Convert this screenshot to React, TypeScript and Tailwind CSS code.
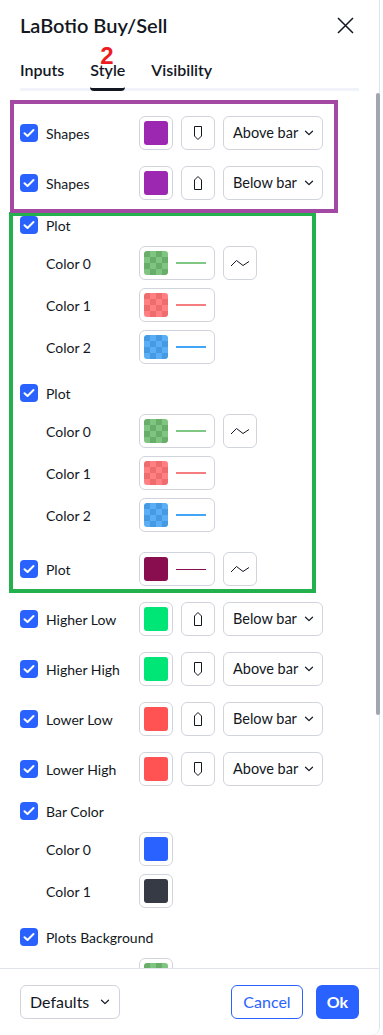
import React from 'react';

const font = "font-['Lato',sans-serif]";

type Swatch = { solid?: string; dark?: string; light?: string };

const GREEN_CHK: Swatch = { dark: '#69ad6b', light: '#7fc481' };
const RED_CHK: Swatch = { dark: '#ee6b6e', light: '#ff7f82' };
const BLUE_CHK: Swatch = { dark: '#459ae3', light: '#5aaef5' };

const Check = () => (
  <span className="flex h-[18px] w-[18px] shrink-0 items-center justify-center rounded-[4px] bg-[#2962ff]">
    <svg width="12" height="10" viewBox="0 0 12 10" fill="none">
      <path d="M1.5 5.2 L4.5 8 L10.5 2" stroke="white" strokeWidth="2" strokeLinecap="round" strokeLinejoin="round" />
    </svg>
  </span>
);

const SwatchBox = ({ s }: { s: Swatch }) => {
  if (s.solid) return <span className="block h-6 w-6 rounded-[3px]" style={{ background: s.solid }} />;
  const cells = Array.from({ length: 16 }, (_, i) => ((Math.floor(i / 4) + (i % 4)) % 2 === 0 ? s.dark : s.light));
  return (
    <span className="grid h-6 w-6 grid-cols-4 overflow-hidden rounded-[3px]">
      {cells.map((c, i) => (
        <span key={i} style={{ background: c }} />
      ))}
    </span>
  );
};

const ColorBtn = ({ s, line, thin }: { s: Swatch; line?: string; thin?: boolean }) => (
  <div className={`flex h-[34px] shrink-0 items-center rounded-md border border-[#d1d4dc] pl-[4px] ${line ? 'pr-[8px]' : 'pr-[4px]'}`}>
    <SwatchBox s={s} />
    {line && <span className={`ml-2 block w-[30px] ${thin ? 'h-px' : 'h-[2px]'}`} style={{ background: line }} />}
  </div>
);

const SquareBtn = ({ children }: { children: React.ReactNode }) => (
  <div className="flex h-[34px] w-[34px] shrink-0 items-center justify-center rounded-md border border-[#d1d4dc]">
    {children}
  </div>
);

const ShapeIcon = ({ up }: { up?: boolean }) => (
  <svg width="10" height="16" viewBox="0 0 10 16" fill="none">
    {up ? (
      <path d="M5 1.5 L8.5 5 V14.5 H1.5 V5 Z" stroke="#131722" strokeWidth="1" strokeLinejoin="round" />
    ) : (
      <path d="M1.5 1.5 H8.5 V11 L5 14.5 L1.5 11 Z" stroke="#131722" strokeWidth="1" strokeLinejoin="round" />
    )}
  </svg>
);

const WaveIcon = () => (
  <svg width="20" height="10" viewBox="0 0 20 10" fill="none">
    <path d="M1 8 L6.5 2.5 L13 7.5 L19 3.5" stroke="#131722" strokeWidth="1" strokeLinejoin="round" />
  </svg>
);

const Chevron = () => (
  <svg width="10" height="6" viewBox="0 0 10 6" fill="none">
    <path d="M1.5 1.2 L5 4.6 L8.5 1.2" stroke="#131722" strokeWidth="1.2" strokeLinecap="round" strokeLinejoin="round" />
  </svg>
);

const Select = ({ value }: { value: string }) => (
  <div className="flex h-[34px] w-[100px] shrink-0 items-center justify-between rounded-md border border-[#d1d4dc] pl-[9px] pr-[8px] text-[14.5px] text-[#131722]">
    <span className="whitespace-nowrap">{value}</span>
    <Chevron />
  </div>
);

const CheckLabel = ({ label }: { label: string }) => (
  <div className="flex w-[119px] shrink-0 items-center gap-2 text-[14px] text-[#131722]">
    <Check />
    <span className="whitespace-nowrap">{label}</span>
  </div>
);

const SubLabel = ({ label }: { label: string }) => (
  <div className="w-[119px] shrink-0 pl-[26px] text-[14px] text-[#131722]">{label}</div>
);

const ShapeRow = ({ label, color, up, place, mt }: { label: string; color: string; up?: boolean; place: string; mt: string }) => (
  <div className={`flex h-[34px] items-center ${mt}`}>
    <CheckLabel label={label} />
    <div className="flex items-center gap-2">
      <ColorBtn s={{ solid: color }} />
      <SquareBtn>
        <ShapeIcon up={up} />
      </SquareBtn>
      <Select value={place} />
    </div>
  </div>
);

const ColorRow = ({ label, s, line, wave, mt }: { label: string; s: Swatch; line?: string; wave?: boolean; mt: string }) => (
  <div className={`flex h-[34px] items-center ${mt}`}>
    <SubLabel label={label} />
    <div className="flex items-center gap-2">
      <ColorBtn s={s} line={line} />
      {wave && (
        <SquareBtn>
          <WaveIcon />
        </SquareBtn>
      )}
    </div>
  </div>
);

const HeaderRow = ({ label, mt }: { label: string; mt: string }) => (
  <div className={`flex h-[18px] items-center ${mt}`}>
    <CheckLabel label={label} />
  </div>
);

export default function App() {
  return (
    <div className={`relative h-[1035px] w-[383px] overflow-hidden bg-white ${font}`}>
      <div className="flex h-full w-[380px] flex-col rounded-br-lg border-r border-[#e0e3eb] bg-white">
        {/* header */}
        <div className="flex h-[50px] shrink-0 items-center justify-between pl-5 pr-[25px]">
          <h1 className="text-[20px] font-semibold text-[#131722]">LaBotio Buy/Sell</h1>
          <svg width="17" height="17" viewBox="0 0 17 17" fill="none">
            <path d="M1 1 L16 16 M16 1 L1 16" stroke="#131722" strokeWidth="1.5" />
          </svg>
        </div>

        {/* tabs */}
        <div className="mx-5 flex h-[41px] shrink-0 items-end gap-[26px] border-b-[3px] border-[#f0f3fa] text-[16px] font-semibold text-[#131722]">
          <div className="pb-[6px]">Inputs</div>
          <div className="relative -mb-[3px] rounded-sm border-b-[3px] border-[#131722] pb-[6px]">
            Style
            <span className="absolute -top-[14px] left-[10px] font-['Liberation_Sans',sans-serif] text-[24px] font-bold leading-none text-[#ed1c24]">
              2
            </span>
          </div>
          <div className="pb-[6px]">Visibility</div>
        </div>

        {/* content */}
        <div className="flex flex-1 flex-col overflow-hidden px-5">
          <ShapeRow label="Shapes" color="#9c27b0" place="Above bar" mt="mt-[25px]" />
          <ShapeRow label="Shapes" color="#9c27b0" up place="Below bar" mt="mt-4" />

          <HeaderRow label="Plot" mt="mt-4" />
          <ColorRow label="Color 0" s={GREEN_CHK} line="#81c784" wave mt="mt-3" />
          <ColorRow label="Color 1" s={RED_CHK} line="#f77c80" mt="mt-2" />
          <ColorRow label="Color 2" s={BLUE_CHK} line="#42a5f5" mt="mt-2" />

          <HeaderRow label="Plot" mt="mt-5" />
          <ColorRow label="Color 0" s={GREEN_CHK} line="#81c784" wave mt="mt-3" />
          <ColorRow label="Color 1" s={RED_CHK} line="#f77c80" mt="mt-2" />
          <ColorRow label="Color 2" s={BLUE_CHK} line="#42a5f5" mt="mt-2" />

          <div className="mt-5 flex h-[34px] items-center">
            <CheckLabel label="Plot" />
            <div className="flex items-center gap-2">
              <ColorBtn s={{ solid: '#880e4f' }} line="#880e4f" thin />
              <SquareBtn>
                <WaveIcon />
              </SquareBtn>
            </div>
          </div>

          <ShapeRow label="Higher Low" color="#00e676" up place="Below bar" mt="mt-4" />
          <ShapeRow label="Higher High" color="#00e676" place="Above bar" mt="mt-4" />
          <ShapeRow label="Lower Low" color="#ff5252" up place="Below bar" mt="mt-4" />
          <ShapeRow label="Lower High" color="#ff5252" place="Above bar" mt="mt-4" />

          <HeaderRow label="Bar Color" mt="mt-4" />
          <ColorRow label="Color 0" s={{ solid: '#2962ff' }} mt="mt-3" />
          <ColorRow label="Color 1" s={{ solid: '#363a45' }} mt="mt-2" />

          <HeaderRow label="Plots Background" mt="mt-5" />
          <ColorRow label="" s={GREEN_CHK} mt="mt-3" />
        </div>

        {/* footer */}
        <div className="flex shrink-0 items-center justify-between border-t border-[#e0e3eb] px-5 py-4">
          <div className="flex h-[34px] w-[100px] items-center justify-between rounded-md border border-[#d1d4dc] pl-[9px] pr-[9px] text-[16px] text-[#131722]">
            <span>Defaults</span>
            <Chevron />
          </div>
          <div className="flex items-center gap-[13px]">
            <button className="h-[34px] w-[72px] rounded-md border border-[#2962ff] text-[16px] text-[#2962ff]">Cancel</button>
            <button className="h-[34px] w-[43px] rounded-md bg-[#2962ff] text-[16px] font-bold text-white">Ok</button>
          </div>
        </div>
      </div>

      {/* scrollbar thumb */}
      <div className="absolute left-[376px] top-[93px] h-[622px] w-[4px] rounded-full bg-[#a3a6af]" />

      {/* annotation boxes */}
      <div className="pointer-events-none absolute left-[9px] top-[212px] h-[381px] w-[307px] border-4 border-[#22b14c]" />
      <div className="pointer-events-none absolute left-[10px] top-[100px] h-[113px] w-[328px] border-4 border-[#a349a4]" />
    </div>
  );
}
